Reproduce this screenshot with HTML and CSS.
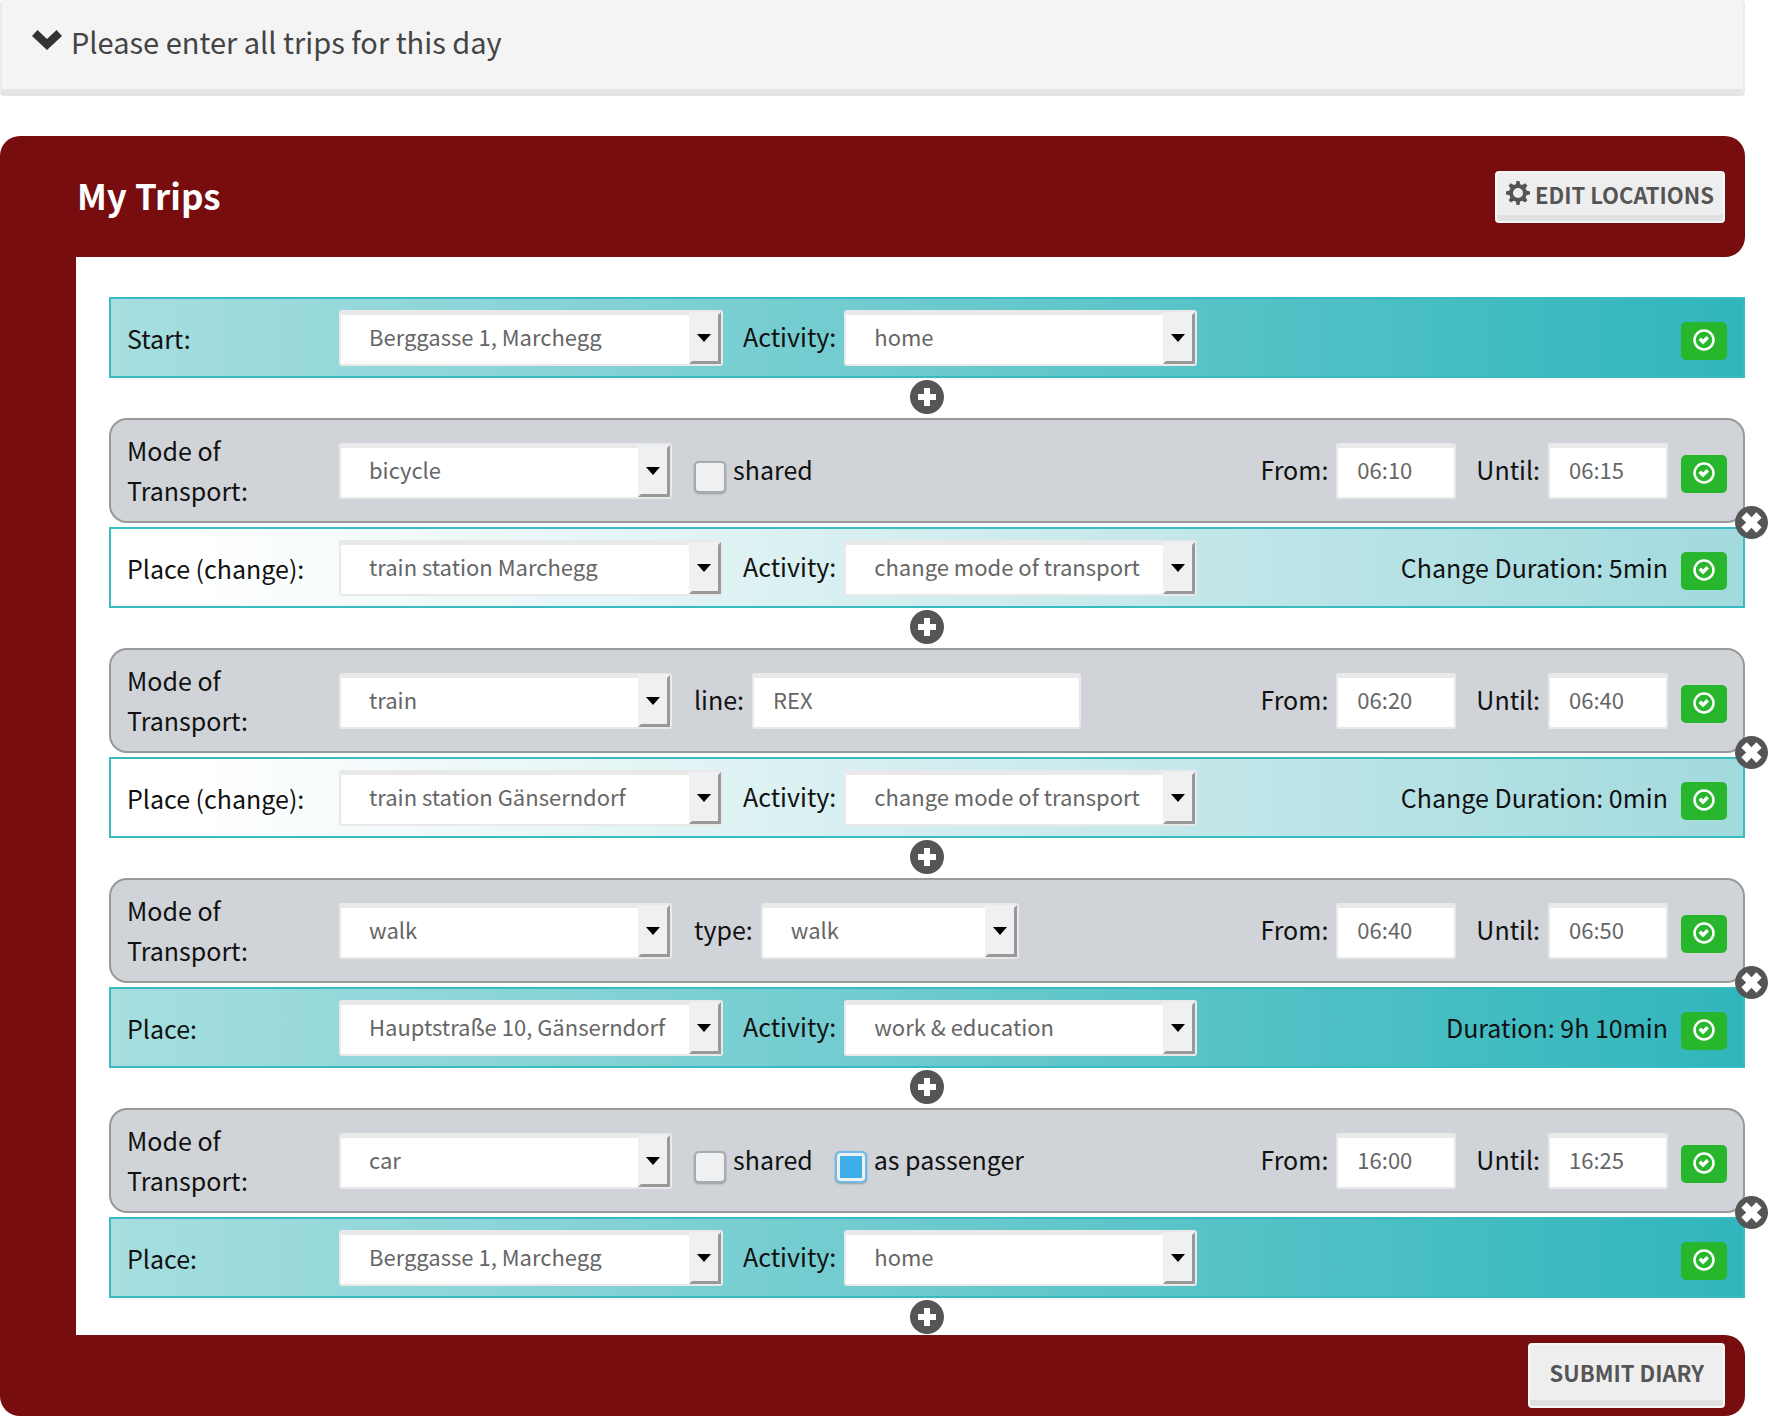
FILE: index.html
```html
<!DOCTYPE html>
<html lang="en">
<head>
<meta charset="utf-8">
<title>Trip diary</title>
<link rel="stylesheet" href="styles.css">
</head>
<body>
<svg class="sprite" aria-hidden="true">
  <symbol id="i-chevron" viewBox="0 0 30 20"><path d="M0 6 5.500 0 15 9 24.500 0 30 6 15 20z"/></symbol>
  <symbol id="i-cog" viewBox="0 0 24 24"><path fill-rule="evenodd" d="M10.500 0h3l.6 3.200 2.200.9L19.100 2.300l2.300 2.300-1.800 2.800.9 2.200 3.500.8v3.200l-3.500.6-.9 2.200 1.800 2.900-2.300 2.300-2.800-1.900-2.200.9-.6 3.400h-3l-.6-3.400-2.200-.9-2.800 1.900-2.300-2.300 1.800-2.900-.9-2.200L0 13.600v-3.200l3.500-.8.9-2.200-1.800-2.800 2.300-2.300 2.800 1.800 2.200-.9zM12 7a5 5 0 1 0 0 10 5 5 0 0 0 0-10z"/></symbol>
  <symbol id="i-plus" viewBox="0 0 34 34"><path fill-rule="evenodd" d="M17 0a17 17 0 1 0 0 34 17 17 0 0 0 0-34zM14 8h6v6h6v6h-6v6h-6v-6H8v-6h6z"/></symbol>
  <symbol id="i-remove" viewBox="0 0 34 34"><circle cx="17" cy="17" r="17"/><path fill="#fff" d="M12 6.500 17 11.500 22 6.500 27.500 12 22.500 17 27.500 22 22 27.500 17 22.500 12 27.500 6.500 22 11.500 17 6.500 12z"/></symbol>
  <symbol id="i-ok" viewBox="0 0 22 22"><circle cx="11" cy="11" r="9.500" fill="none" stroke="currentColor" stroke-width="2.500"/><path d="M5.500 11 8 8.500 10 10.500 13.500 7 16 9.500 10 15.500z"/></symbol>
</svg>

<header class="notice">
  <svg class="chevron"><use href="#i-chevron"/></svg>
  <h2 class="notice-title">Please enter all trips for this day</h2>
</header>

<main class="panel">
  <div class="panel-head">
    <h1 class="panel-title">My Trips</h1>
    <button class="btn" type="button"><svg class="cog"><use href="#i-cog"/></svg>EDIT LOCATIONS</button>
  </div>

  <form class="trips" id="trips">
    <div class="row place">
      <label class="name" for="p0">Start:</label>
      <span class="pick wide"><select id="p0"><option>Berggasse 1, Marchegg</option></select></span>
      <label class="cap" for="a0">Activity:</label>
      <span class="pick activity"><select id="a0"><option>home</option></select></span>
      <button class="ok" type="button" aria-label="Confirm"><svg><use href="#i-ok"/></svg></button>
    </div>
    <button class="add" type="button" aria-label="Add trip"><svg><use href="#i-plus"/></svg></button>

    <div class="row mode">
      <label class="name" for="m1">Mode of Transport:</label>
      <span class="pick transport"><select id="m1"><option>bicycle</option></select></span>
      <label class="check"><input type="checkbox"><span>shared</span></label>
      <label class="cap from" for="f1">From:</label>
      <input class="text time" id="f1" type="text" value="06:10">
      <label class="cap" for="u1">Until:</label>
      <input class="text time" id="u1" type="text" value="06:15">
      <button class="ok" type="button" aria-label="Confirm"><svg><use href="#i-ok"/></svg></button>
      <button class="remove" type="button" aria-label="Remove trip"><svg><use href="#i-remove"/></svg></button>
    </div>
    <div class="row change">
      <label class="name" for="p1">Place (change):</label>
      <span class="pick wide"><select id="p1"><option>train station Marchegg</option></select></span>
      <label class="cap" for="a1">Activity:</label>
      <span class="pick activity"><select id="a1"><option>change mode of transport</option></select></span>
      <span class="duration">Change Duration: 5min</span>
      <button class="ok" type="button" aria-label="Confirm"><svg><use href="#i-ok"/></svg></button>
    </div>
    <button class="add" type="button" aria-label="Add trip"><svg><use href="#i-plus"/></svg></button>

    <div class="row mode">
      <label class="name" for="m2">Mode of Transport:</label>
      <span class="pick transport"><select id="m2"><option>train</option></select></span>
      <label class="cap" for="l2">line:</label>
      <input class="text line" id="l2" type="text" value="REX">
      <label class="cap from" for="f2">From:</label>
      <input class="text time" id="f2" type="text" value="06:20">
      <label class="cap" for="u2">Until:</label>
      <input class="text time" id="u2" type="text" value="06:40">
      <button class="ok" type="button" aria-label="Confirm"><svg><use href="#i-ok"/></svg></button>
      <button class="remove" type="button" aria-label="Remove trip"><svg><use href="#i-remove"/></svg></button>
    </div>
    <div class="row change">
      <label class="name" for="p2">Place (change):</label>
      <span class="pick wide"><select id="p2"><option>train station Gänserndorf</option></select></span>
      <label class="cap" for="a2">Activity:</label>
      <span class="pick activity"><select id="a2"><option>change mode of transport</option></select></span>
      <span class="duration">Change Duration: 0min</span>
      <button class="ok" type="button" aria-label="Confirm"><svg><use href="#i-ok"/></svg></button>
    </div>
    <button class="add" type="button" aria-label="Add trip"><svg><use href="#i-plus"/></svg></button>

    <div class="row mode">
      <label class="name" for="m3">Mode of Transport:</label>
      <span class="pick transport"><select id="m3"><option>walk</option></select></span>
      <label class="cap" for="t3">type:</label>
      <span class="pick kind"><select id="t3"><option>walk</option></select></span>
      <label class="cap from" for="f3">From:</label>
      <input class="text time" id="f3" type="text" value="06:40">
      <label class="cap" for="u3">Until:</label>
      <input class="text time" id="u3" type="text" value="06:50">
      <button class="ok" type="button" aria-label="Confirm"><svg><use href="#i-ok"/></svg></button>
      <button class="remove" type="button" aria-label="Remove trip"><svg><use href="#i-remove"/></svg></button>
    </div>
    <div class="row place">
      <label class="name" for="p3">Place:</label>
      <span class="pick wide"><select id="p3"><option>Hauptstraße 10, Gänserndorf</option></select></span>
      <label class="cap" for="a3">Activity:</label>
      <span class="pick activity"><select id="a3"><option>work &amp; education</option></select></span>
      <span class="duration">Duration: 9h 10min</span>
      <button class="ok" type="button" aria-label="Confirm"><svg><use href="#i-ok"/></svg></button>
    </div>
    <button class="add" type="button" aria-label="Add trip"><svg><use href="#i-plus"/></svg></button>

    <div class="row mode">
      <label class="name" for="m4">Mode of Transport:</label>
      <span class="pick transport"><select id="m4"><option>car</option></select></span>
      <label class="check"><input type="checkbox"><span>shared</span></label>
      <label class="check"><input type="checkbox" checked><span>as passenger</span></label>
      <label class="cap from" for="f4">From:</label>
      <input class="text time" id="f4" type="text" value="16:00">
      <label class="cap" for="u4">Until:</label>
      <input class="text time" id="u4" type="text" value="16:25">
      <button class="ok" type="button" aria-label="Confirm"><svg><use href="#i-ok"/></svg></button>
      <button class="remove" type="button" aria-label="Remove trip"><svg><use href="#i-remove"/></svg></button>
    </div>
    <div class="row place">
      <label class="name" for="p4">Place:</label>
      <span class="pick wide"><select id="p4"><option>Berggasse 1, Marchegg</option></select></span>
      <label class="cap" for="a4">Activity:</label>
      <span class="pick activity"><select id="a4"><option>home</option></select></span>
      <button class="ok" type="button" aria-label="Confirm"><svg><use href="#i-ok"/></svg></button>
    </div>
    <button class="add" type="button" aria-label="Add trip"><svg><use href="#i-plus"/></svg></button>
  </form>

  <div class="panel-foot">
    <button class="btn submit" type="submit" form="trips">SUBMIT DIARY</button>
  </div>
</main>
</body>
</html>
```
FILE: styles.css
```css
*, *::before, *::after { box-sizing: border-box; }

body {
  margin: 0;
  padding-right: 25px;
  background: #fff;
  color: #111;
  font: 25px/40px "Noto Sans CJK SC", sans-serif;
}

button, input, select { font: inherit; margin: 0; }
button { padding: 0; border: 0; cursor: pointer; }
svg { display: block; fill: currentColor; }
.sprite { display: none; }

/* Notice bar */
.notice {
  display: flex;
  align-items: center;
  gap: 9px;
  height: 96px;
  padding: 0 30px 8px;
  background: #f4f4f4;
  border: 2px solid #ebebeb;
  border-top: 0;
  border-bottom: 7px solid #e5e5e5;
  border-radius: 4px;
  color: #333;
}
.chevron { width: 30px; height: 20px; margin-bottom: 2px; }
.notice-title { margin: 0; font-size: 29px; font-weight: 400; color: #444; }

/* Panel */
.panel { margin-top: 40px; }
.panel-head, .panel-foot {
  display: flex;
  align-items: center;
  justify-content: space-between;
  padding: 0 20px 0 77px;
  background: #770d0f;
}
.panel-head { height: 121px; border-radius: 20px 20px 20px 0; }
.panel-foot { height: 81px; border-radius: 0 20px 20px 20px; justify-content: flex-end; }
.panel-title { margin: 0; padding-bottom: 4px; font-size: 35px; font-weight: 700; color: #fff; }
.btn {
  display: flex;
  align-items: center;
  justify-content: center;
  gap: 5px;
  height: 52px;
  padding: 0 9px 6px;
  background: #eee;
  border: 2px solid #f6f6f6;
  border-radius: 4px;
  box-shadow: inset 0 -6px #e0e0e0;
  color: #555;
  font-size: 22px;
  font-weight: 700;
}
.cog { width: 24px; height: 24px; margin-bottom: 2px; }
.submit { height: 65px; padding: 0 19px 7px; }

/* Trip rows */
.trips {
  padding: 40px 0 1px 33px;
  border-left: 76px solid #770d0f;
}
.row {
  position: relative;
  display: flex;
  align-items: center;
  height: 81px;
  padding: 0 16px;
  border: 2px solid #38bcc2;
}
.place { background: linear-gradient(to right, #a7dee0, #30b6bc); }
.change { background: linear-gradient(to right, #fff 5%, #a2dade); }
.mode {
  height: 105px;
  margin-bottom: 4px;
  background: #d0d4d8;
  border-color: #999;
  border-radius: 18px;
}
.name { width: 212px; }
.mode .name { padding: 0 60px 2px 0; }
.cap { margin: 0 8px 0 20px; padding-bottom: 4px; }
.transport + .cap { margin-left: 22px; }
.from { margin-left: auto; }
.duration { margin-left: auto; padding-bottom: 2px; }

.pick { position: relative; height: 56px; }
.wide { width: 384px; }
.activity { width: 353px; }
.transport { width: 333px; }
.kind { width: 258px; }
select, .text {
  width: 100%;
  height: 56px;
  background: #fff;
  border: 2px solid #e9e9e9;
  border-top-width: 5px;
  border-radius: 3px;
  color: #666;
  font-size: 22px;
  line-height: 32px;
  appearance: none;
}
select { padding: 0 40px 7px 28px; }
.text { padding: 0 19px 7px; }
.time { width: 120px; }
.line { width: 329px; }

/* Drop-down button with its arrow */
.pick::before {
  content: "";
  position: absolute;
  top: 2px;
  right: 2px;
  width: 32px;
  height: 52px;
  background: #eff0f1;
  border: 3px solid;
  border-color: #eff0f1 #999 #999 #eff0f1;
  pointer-events: none;
}
.pick::after {
  content: "";
  position: absolute;
  top: 24px;
  right: 12px;
  width: 14px;
  border: 7px solid transparent;
  border-top: 8px solid #000;
  border-bottom: 0;
  pointer-events: none;
}

.check { display: flex; align-items: center; gap: 7px; margin-left: 22px; }
.check span { padding-bottom: 4px; }
.check input {
  width: 32px;
  height: 32px;
  margin-top: 12px;
  background: #eff0f1;
  border: 2px solid #a8abae;
  border-radius: 5px;
  box-shadow: 0 1px 2px #999;
  appearance: none;
}
.check input:checked {
  background: #3daee9;
  border-color: #6cbdec;
  box-shadow: inset 0 0 0 3px #eff0f1, 0 1px 2px #999;
}

.ok {
  display: grid;
  place-items: center;
  width: 46px;
  height: 38px;
  margin: 6px 0 0 13px;
  padding-bottom: 2px;
  background: #28b62c;
  border-radius: 5px;
  color: #fff;
}
.activity + .ok { margin-left: auto; }
.ok svg { width: 22px; height: 22px; }

.add {
  display: block;
  width: 34px;
  height: 34px;
  margin: 2px auto 4px;
  background: none;
  color: #555;
}
.add:last-child { margin-bottom: 0; }
.add svg { width: 34px; height: 34px; }
.remove {
  position: absolute;
  right: -25px;
  bottom: -18px;
  z-index: 1;
  border-radius: 50%;
  background: none;
  color: #555;
}
.remove svg { width: 33px; height: 33px; }
```
